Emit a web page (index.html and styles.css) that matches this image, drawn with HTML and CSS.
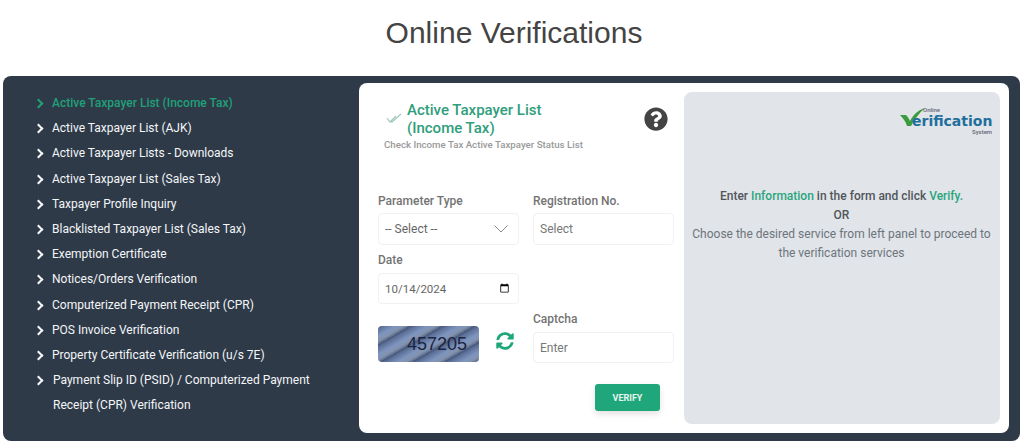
FILE: index.html
```html
<!DOCTYPE html>
<html>
<head>
<meta charset="UTF-8">
<title>Online Verifications</title>
<link rel="stylesheet" href="styles.css">
</head>
<body>

<h1 class="pageTitle">Online Verifications</h1>

<div class="mainPanel">

	<!-- left menu -->
	<ul class="sideMenu">
		<li class="active">Active Taxpayer List (Income Tax)</li>
		<li>Active Taxpayer List (AJK)</li>
		<li>Active Taxpayer Lists - Downloads</li>
		<li>Active Taxpayer List (Sales Tax)</li>
		<li>Taxpayer Profile Inquiry</li>
		<li>Blacklisted Taxpayer List (Sales Tax)</li>
		<li>Exemption Certificate</li>
		<li>Notices/Orders Verification</li>
		<li>Computerized Payment Receipt (CPR)</li>
		<li>POS Invoice Verification</li>
		<li>Property Certificate Verification (u/s 7E)</li>
		<li class="longItem">Payment Slip ID (PSID) / Computerized Payment Receipt (CPR) Verification</li>
	</ul>

	<div class="card">

		<!-- form side -->
		<div class="formSide">
			<div class="formHead">
				<div class="headTitle">
					<svg class="checkIcon" viewBox="0 0 16 10" width="16" height="10">
						<path d="M1 5l3 4 6-6M5 8.5l1 .5 9-8" fill="none" stroke="#9fc9b8" stroke-width="1.2"/>
					</svg>
					<h2>Active Taxpayer List<br>(Income Tax)</h2>
				</div>
				<svg class="helpIcon" viewBox="0 0 512 512" width="24" height="24">
					<path fill="#444" d="M504 256c0 136.997-111.043 248-248 248S8 392.997 8 256C8 119.083 119.043 8 256 8s248 111.083 248 248zM262.655 90c-54.497 0-89.255 22.957-116.549 63.758-3.536 5.286-2.353 12.415 2.715 16.258l34.699 26.31c5.205 3.947 12.621 3.008 16.665-2.122 17.864-22.658 30.113-35.797 57.303-35.797 20.429 0 45.698 13.148 45.698 32.958 0 14.976-12.363 22.667-32.534 33.976C247.128 238.528 216 254.941 216 296v4c0 6.627 5.373 12 12 12h56c6.627 0 12-5.373 12-12v-1.333c0-28.462 83.186-29.647 83.186-106.667 0-58.002-60.165-102-116.531-102zM256 338c-25.365 0-46 20.635-46 46 0 25.364 20.635 46 46 46s46-20.636 46-46c0-25.365-20.635-46-46-46z"/>
				</svg>
			</div>
			<p class="headSub">Check Income Tax Active Taxpayer Status List</p>

			<div class="formGrid">
				<div class="field">
					<label>Parameter Type</label>
					<div class="selectWrap">
						<select class="control"><option>-- Select --</option></select>
						<svg class="selectArrow" viewBox="0 0 14 8" width="14" height="8">
							<path d="M.5 .5L7 7 13.5 .5" fill="none" stroke="#888" stroke-width="1"/>
						</svg>
					</div>
				</div>
				<div class="field">
					<label>Registration No.</label>
					<input class="control" type="text" placeholder="Select">
				</div>
				<div class="field shortField dateField">
					<label>Date</label>
					<input class="control" type="date" value="2024-10-14">
				</div>
				<div class="captchaBox">
					<div class="captchaImg">457205</div>
					<svg class="refreshIcon" viewBox="0 0 512 512" width="18" height="18">
						<path fill="#1fa67a" d="M370.72 133.28C339.458 104.008 298.888 87.962 255.848 88c-77.458.068-144.328 53.178-162.791 126.85-1.344 5.363-6.122 9.15-11.651 9.15H24.103c-7.498 0-13.194-6.807-11.807-14.176C33.933 94.924 134.813 8 256 8c66.448 0 126.791 26.136 171.315 68.685L463.03 40.97C478.149 25.851 504 36.559 504 57.941V192c0 13.255-10.745 24-24 24H345.941c-21.382 0-32.09-25.851-16.971-40.971l41.75-41.749zM32 296h134.059c21.382 0 32.09 25.851 16.971 40.971l-41.75 41.75c31.262 29.273 71.835 45.319 114.876 45.28 77.418-.07 144.315-53.144 162.787-126.849 1.344-5.363 6.122-9.15 11.651-9.15h57.304c7.498 0 13.194 6.807 11.807 14.176C478.067 417.076 377.187 504 256 504c-66.448 0-126.791-26.136-171.315-68.685L48.97 471.03C33.851 486.149 8 475.441 8 454.059V320c0-13.255 10.745-24 24-24z"/>
					</svg>
				</div>
				<div class="field shortField captchaField">
					<label>Captcha</label>
					<input class="control" type="text" placeholder="Enter">
				</div>
			</div>

			<div class="formFoot">
				<button class="verifyBtn" type="button">VERIFY</button>
			</div>
		</div>

		<!-- info side -->
		<div class="infoSide">
			<svg class="logo" viewBox="0 0 96 32" width="96" height="32">
				<path d="M2 11h6c2 2 3 4 4 6C15 11 20 6 27 4 21 9 16 16 13 22H9C8 18 5 14 2 11z" fill="#3c9a3f"/>
				<text class="logoSmall" x="25" y="8">Online</text>
				<text class="logoMain" x="14" y="22">erification</text>
				<text class="logoSmall" x="74" y="30">System</text>
			</svg>
			<div class="infoText">
				<p class="infoStrong">Enter <span>Information</span> in the form and click <span>Verify.</span></p>
				<p class="infoStrong">OR</p>
				<p>Choose the desired service from left panel to proceed to the verification services</p>
			</div>
		</div>

	</div>
</div>

</body>
</html>
```

FILE: styles.css
```css
/* base */
html, body {
	margin: 0;
	padding: 0;
	background: #fff;
	font-family: Roboto, "Liberation Sans", sans-serif;
}

.pageTitle {
	margin: 0;
	height: 76px;
	padding-left: 4px;
	line-height: 66px;
	text-align: center;
	font-family: "Liberation Sans", sans-serif;
	font-size: 30px;
	font-weight: 400;
	color: #444;
}

.mainPanel {
	display: flex;
	height: 365px;
	margin: 0 4px 0 3px;
	padding: 7px 11px 8px 0;
	box-sizing: border-box;
	background: #2e3a48;
	border-radius: 8px;
}

/* left menu */
.sideMenu {
	flex: 0 0 356px;
	box-sizing: border-box;
	margin: 0;
	padding: 8px 10px 0 33px;
	list-style: none;
}
.sideMenu li {
	position: relative;
	padding-left: 16px;
	line-height: 25.2px;
	font-size: 12px;
	font-weight: 400;
	color: #f4f6f8;
}
.sideMenu li::before {
	content: "";
	position: absolute;
	left: -1px;
	top: 9px;
	width: 5px;
	height: 5px;
	border-top: 2px solid currentColor;
	border-right: 2px solid currentColor;
	transform: rotate(45deg);
}
.sideMenu li.active {
	font-weight: 500;
	color: #21a078;
}
.sideMenu li.longItem {
	padding-left: 17px;
}

/* card */
.card {
	flex: 1;
	display: flex;
	padding: 9px;
	background: #fff;
	border-radius: 8px;
}

.formSide {
	flex: 0 0 296px;
	margin: 9px 10px 0 10px;
}

.formHead {
	display: flex;
	justify-content: space-between;
	align-items: flex-start;
	padding: 0 6px 0 8px;
}
.headTitle {
	display: flex;
	align-items: center;
	gap: 5px;
}
.headTitle h2 {
	margin: 0;
	font-size: 15px;
	line-height: 18px;
	font-weight: 500;
	color: #2f9e7c;
}
.checkIcon {
	margin-top: -3px;
}
.helpIcon {
	margin-top: 6px;
}
.headSub {
	margin: 1px 0 0 6px;
	font-size: 9.7px;
	line-height: 14px;
	font-weight: 500;
	color: #999;
}

.formGrid {
	display: grid;
	grid-template-columns: 141px 141px;
	column-gap: 14px;
	margin-top: 42px;
}
.field label {
	display: block;
	font-size: 12px;
	line-height: 14px;
	font-weight: 500;
	color: #737373;
	margin-bottom: 5px;
}
.control {
	display: block;
	width: 100%;
	height: 32px;
	box-sizing: border-box;
	padding: 0 6px;
	background: #fff;
	border: 1px solid #f1f1f1;
	border-radius: 4px;
	font-family: inherit;
	font-size: 12px;
	color: #666;
	outline: none;
}
.control::placeholder {
	color: #777;
}
.control::-webkit-datetime-edit-text,
.control::-webkit-datetime-edit-month-field,
.control::-webkit-datetime-edit-day-field,
.control::-webkit-datetime-edit-year-field {
	padding: 0;
}
select.control {
	appearance: none;
}
.selectWrap {
	position: relative;
}
.selectArrow {
	position: absolute;
	right: 11px;
	top: 12px;
}

.shortField label {
	margin-bottom: 6px;
}
.shortField .control {
	height: 31px;
}
.dateField {
	grid-column: 1 / span 2;
	width: 141px;
	margin-top: 8px;
}
.dateField .control {
	font-size: 11.5px;
}
.captchaField {
	margin-top: 8px;
}

.captchaBox {
	display: flex;
	align-items: center;
	gap: 17px;
	height: 36px;
	margin-top: 22px;
}
.captchaImg {
	width: 101px;
	height: 36px;
	border-radius: 4px;
	box-sizing: border-box;
	padding-left: 29px;
	line-height: 36px;
	font-family: "Liberation Sans", sans-serif;
	font-size: 18px;
	color: #1b2440;
	background: repeating-linear-gradient(150deg, #46557a 0, #5f7399 3px, #7f95c0 9px, #8393ad 13px, #5a6b8c 16px);
}
.refreshIcon {
	flex: none;
	margin-top: -6px;
}

.formFoot {
	display: flex;
	justify-content: flex-end;
	padding-right: 14px;
	margin-top: 21px;
}
.verifyBtn {
	width: 65px;
	height: 27px;
	padding: 0;
	border: none;
	border-radius: 3px;
	background: #1fa67a;
	box-shadow: 0 3px 6px rgba(0, 0, 0, .12);
	font-family: inherit;
	font-size: 9px;
	font-weight: 700;
	color: #e6f5ef;
}

/* info side */
.infoSide {
	flex: 1;
	box-sizing: border-box;
	padding: 12px 8px 0 7px;
	background: #e1e4e8;
	border-radius: 8px;
}
.logo {
	display: block;
	margin: 0 -2px 0 auto;
}
.logoMain {
	font-family: "DejaVu Sans", sans-serif;
	font-size: 14px;
	font-weight: 700;
	fill: #1f6f9c;
}
.logoSmall {
	font-family: Roboto, sans-serif;
	font-size: 6px;
	font-weight: 500;
	fill: #667;
}
.infoText {
	margin-top: 51px;
	text-align: center;
	font-size: 12px;
	line-height: 19px;
	color: #6c757d;
}
.infoText p {
	margin: 0;
}
.infoStrong {
	font-weight: 500;
	color: #50565c;
}
.infoStrong span {
	color: #2aa67e;
}
```
